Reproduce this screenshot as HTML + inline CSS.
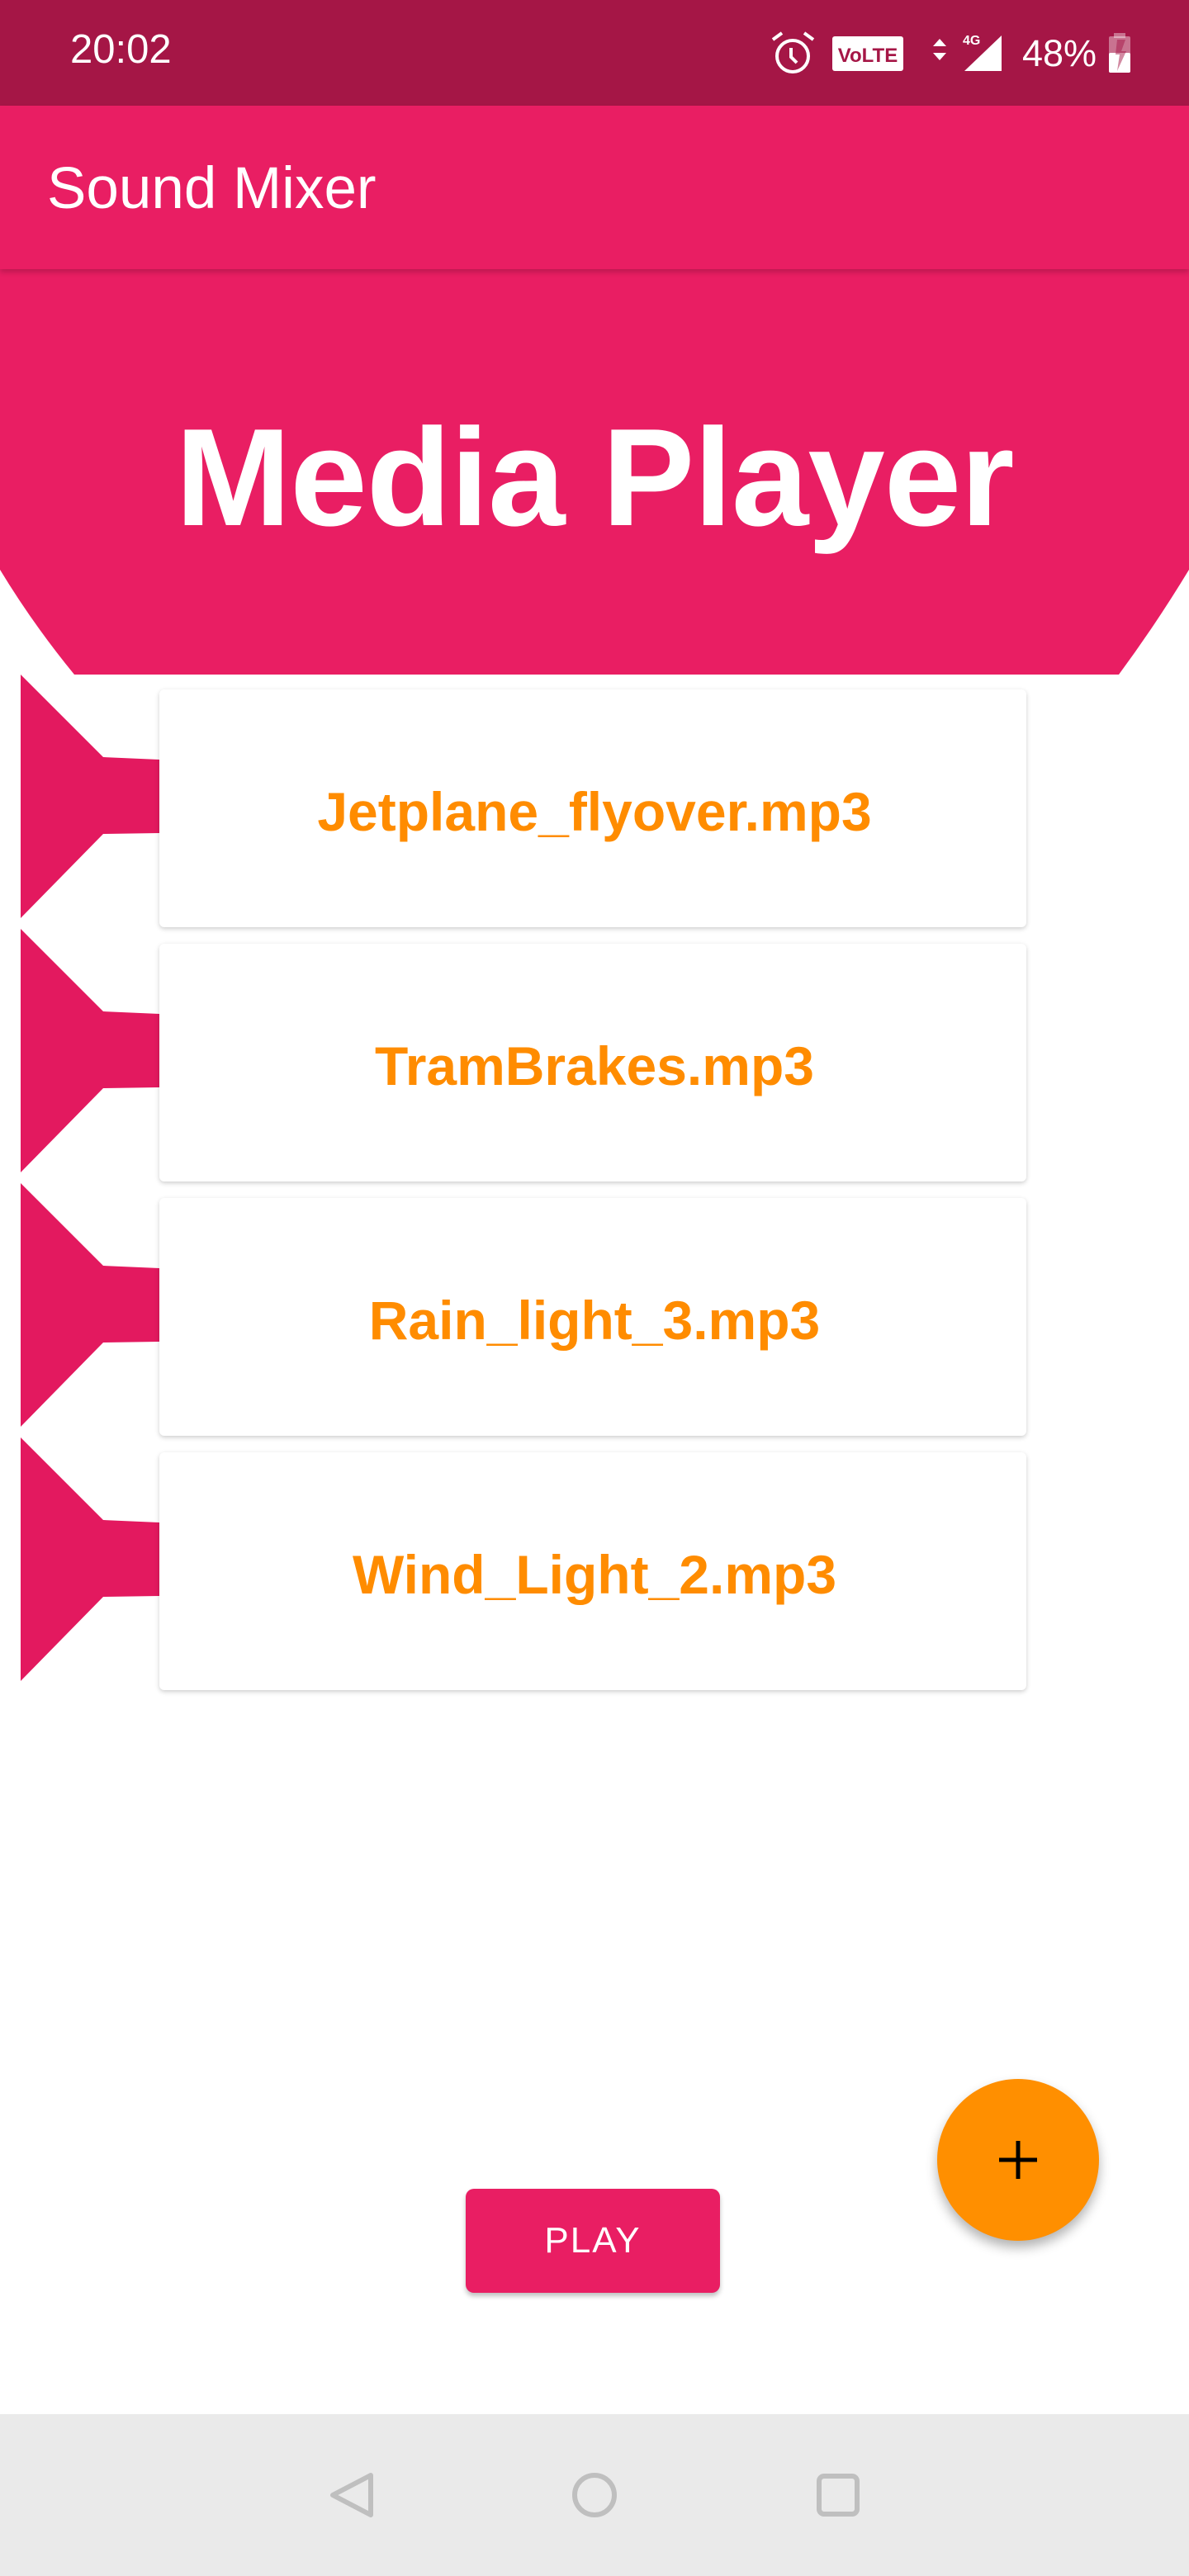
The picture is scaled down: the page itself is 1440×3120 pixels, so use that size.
<!DOCTYPE html>
<html><head><meta charset="utf-8"><style>
*{margin:0;padding:0;box-sizing:border-box}
body{width:1440px;height:3120px;position:relative;background:#fff;font-family:"Liberation Sans",sans-serif;overflow:hidden}
.abs{position:absolute}
.status{left:0;top:0;width:1440px;height:128px;background:#A51646}
.appbar{left:0;top:128px;width:1440px;height:198px;background:#E91E63;box-shadow:0 4px 6px rgba(0,0,0,.18);z-index:2}
.card{left:193px;width:1050px;height:288px;background:#fff;border-radius:6px;box-shadow:0 2px 6px rgba(0,0,0,.2);display:flex;align-items:center;justify-content:center;color:#FF8C00;font-weight:bold;font-size:66px;padding-top:8px;padding-left:4px}
</style></head><body>
<div class="abs status"></div>
<div class="abs" style="left:85px;top:32px;font-size:49px;color:#fff">20:02</div>
<svg class="abs" style="left:930px;top:36px" width="510" height="56" viewBox="0 0 510 56">
 <g fill="none" stroke="#fff" stroke-width="4"><circle cx="30" cy="32" r="19"/><path d="M28 22v11l7 7M6 12l11-8M44 4l11 8"/></g>
 <rect x="78" y="8" width="86" height="42" rx="3" fill="#fff"/>
 <text x="121" y="39" text-anchor="middle" font-family="Liberation Sans" font-weight="bold" font-size="24" fill="#A51646">VoLTE</text>
 <path d="M200 20l8-9 8 9zM200 28l8 9 8-9z" fill="#fff"/>
 <text x="236" y="18" font-family="Liberation Sans" font-weight="bold" font-size="16" fill="#fff">4G</text>
 <path d="M238 50L283 7V50z" fill="#fff"/>
 <text x="308" y="44" font-family="Liberation Sans" font-size="45" fill="#fff">48%</text>
 <rect x="413" y="8" width="26" height="44" rx="2" fill="#fff" opacity=".4"/><rect x="419" y="4" width="14" height="6" fill="#fff" opacity=".4"/>
 <rect x="413" y="28" width="26" height="24" rx="2" fill="#fff"/>
 <path d="M423 12h10l-5 14h6l-11 24 3-20h-5z" fill="#A51646" opacity=".5"/>
</svg>
<div class="abs appbar"><div style="position:absolute;left:57px;top:60px;font-size:71px;color:#fff">Sound Mixer</div></div>
<svg class="abs" style="left:0;top:326px" width="1440" height="491"><path d="M0 0H1440V364Q1400 430 1355 491H90Q40 430 0 364z" fill="#E91E63"/></svg>
<div class="abs" style="left:0;top:488px;width:1440px;text-align:center;font-size:168px;font-weight:bold;color:#fff;line-height:180px;letter-spacing:-1px">Media Player</div>
<svg class="abs" style="left:0;top:817px" width="200" height="1240">
 <g fill="#E3195F">
  <path d="M25 0L125 100L193 103V192L125 193L25 295z"/>
  <path transform="translate(0,308)" d="M25 0L125 100L193 103V192L125 193L25 295z"/>
  <path transform="translate(0,616)" d="M25 0L125 100L193 103V192L125 193L25 295z"/>
  <path transform="translate(0,924)" d="M25 0L125 100L193 103V192L125 193L25 295z"/>
 </g>
</svg>
<div class="abs card" style="top:835px">Jetplane_flyover.mp3</div>
<div class="abs card" style="top:1143px">TramBrakes.mp3</div>
<div class="abs card" style="top:1451px">Rain_light_3.mp3</div>
<div class="abs card" style="top:1759px">Wind_Light_2.mp3</div>
<div class="abs" style="left:1135px;top:2518px;width:196px;height:196px;border-radius:50%;background:#FF8F00;box-shadow:0 8px 14px rgba(0,0,0,.3)"></div>
<svg class="abs" style="left:1208px;top:2591px" width="50" height="50"><path d="M25 2V48M2 25H48" stroke="#000" stroke-width="5"/></svg>
<div class="abs" style="left:564px;top:2651px;width:308px;height:126px;background:#E91E63;border-radius:10px;box-shadow:0 4px 6px rgba(0,0,0,.25);color:#fff;font-size:44px;letter-spacing:2px;display:flex;align-items:center;justify-content:center">PLAY</div>
<div class="abs" style="left:0;top:2924px;width:1440px;height:196px;background:#EAEAEA"></div>
<svg class="abs" style="left:0;top:2924px" width="1440" height="196">
 <g fill="none" stroke="#BFBFBF" stroke-width="6" stroke-linejoin="round">
  <path d="M449 74L403 98L449 122z"/>
  <circle cx="720" cy="98" r="24"/>
  <rect x="992" y="75" width="46" height="46" rx="6"/>
 </g>
</svg>
</body></html>
